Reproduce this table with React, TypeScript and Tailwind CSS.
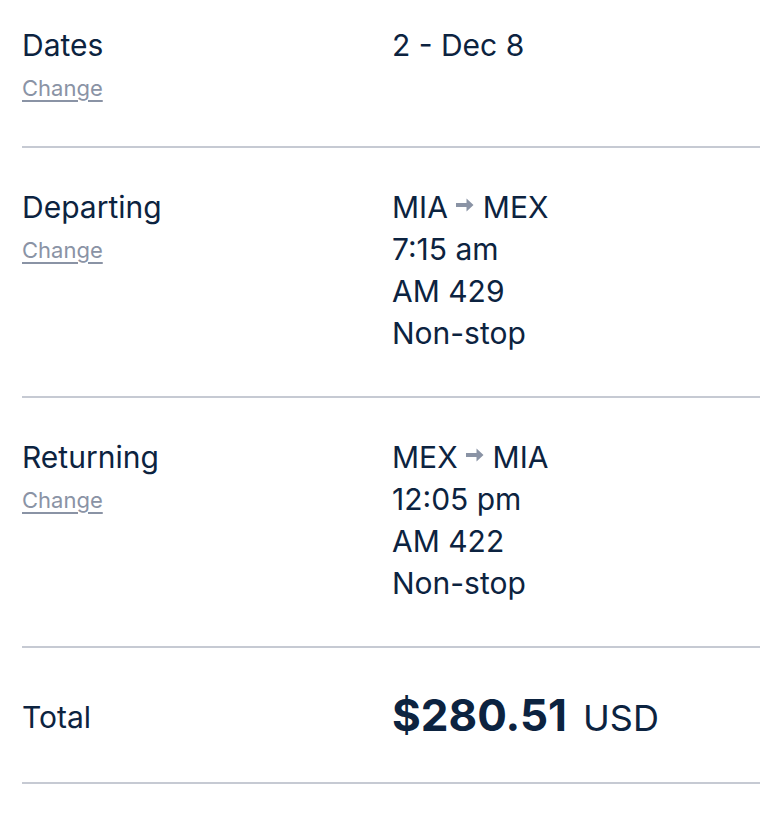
import type { FC } from "react";

const Arrow: FC = () => (
  <svg
    width="18"
    height="14"
    viewBox="0 0 18 14"
    className="ml-[8px] mr-[9px] mb-[5px] inline-block"
    aria-hidden
  >
    <path d="M0 5h10.5V0.5L17.5 7l-7 6.5V9H0z" fill="#8a93a5" />
  </svg>
);

const ChangeLink: FC = () => (
  <a
    href="#"
    className="block text-[22px] leading-[44px] text-[#8a93a5] underline underline-offset-[4px] decoration-[2px]"
  >
    Change
  </a>
);

type RowProps = {
  label: string;
  lines: React.ReactNode[];
  className: string;
};

const Row: FC<RowProps> = ({ label, lines, className }) => (
  <div className={`flex border-b-2 border-[#c6cad3] ${className}`}>
    <div className="w-[370px] shrink-0">
      <div className="text-[30px] leading-[42px]">{label}</div>
      <ChangeLink />
    </div>
    <div className="text-[30px] leading-[42px]">
      {lines.map((l, i) => (
        <div key={i}>{l}</div>
      ))}
    </div>
  </div>
);

const Route: FC<{ from: string; to: string }> = ({ from, to }) => (
  <span className="inline-flex items-center">
    {from}
    <Arrow />
    {to}
  </span>
);

export default function App() {
  return (
    <div
      className="min-h-[820px] bg-white pl-[22px] pr-[16px] text-[#0c2340] antialiased"
      style={{ fontFamily: "Inter, 'Noto Sans', sans-serif" }}
    >
      <Row label="Dates" lines={["2 - Dec 8"]} className="pt-[24px] pb-[36px]" />
      <Row
        label="Departing"
        lines={[<Route from="MIA" to="MEX" />, "7:15 am", "AM 429", "Non-stop"]}
        className="pt-[38px] pb-[42px]"
      />
      <Row
        label="Returning"
        lines={[<Route from="MEX" to="MIA" />, "12:05 pm", "AM 422", "Non-stop"]}
        className="pt-[38px] pb-[42px]"
      />
      <div className="flex items-center border-b-2 border-[#c6cad3] pt-[43px] pb-[40px]">
        <div className="w-[370px] shrink-0 text-[30px] leading-[42px]">Total</div>
        <div className="flex items-baseline">
          <span className="text-[44px] font-bold leading-[48px]">$280.51</span>
          <span className="ml-[16px] text-[36px] leading-[48px]">USD</span>
        </div>
      </div>
    </div>
  );
}
